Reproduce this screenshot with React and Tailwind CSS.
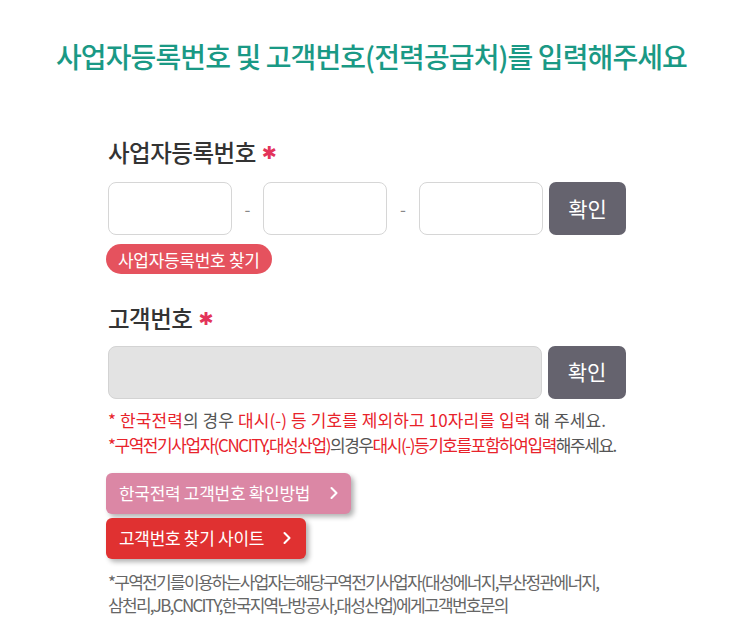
import React from 'react';
import { ChevronRight } from 'lucide-react';

const font = { fontFamily: '"Noto Sans CJK KR", "Noto Sans", sans-serif' };

function Star() {
  return (
    <span
      className="ml-[6px] text-[18px] text-[#e3345a]"
      style={{ fontFamily: '"DejaVu Sans", sans-serif' }}
    >
      ✱
    </span>
  );
}

function ConfirmButton() {
  return (
    <button
      type="button"
      className="h-[53px] w-[78px] rounded-[7px] bg-[#65636e] text-[21px] text-white"
    >
      확인
    </button>
  );
}

export default function App() {
  return (
    <div className="min-h-[644px] w-[743px] bg-white" style={font}>
      <h1 className="pt-[35px] text-center text-[28px] font-medium tracking-[-0.9px] text-[#1a9985]">
        사업자등록번호 및 고객번호(전력공급처)를 입력해주세요
      </h1>

      <div className="ml-[108px] mt-[58px] w-[518px]">
        <div className="flex items-center text-[23.5px] font-medium tracking-[-0.5px] text-[#333]">
          사업자등록번호
          <Star />
        </div>
        <div className="mt-[12px] flex items-center gap-[6px]">
          <div className="flex items-center">
            <input className="h-[53px] w-[124px] rounded-[8px] border border-[#d6d6d6] bg-white" />
            <span className="w-[31px] text-center text-[17px] text-[#888]">-</span>
            <input className="h-[53px] w-[124px] rounded-[8px] border border-[#d6d6d6] bg-white" />
            <span className="w-[32px] text-center text-[17px] text-[#888]">-</span>
            <input className="h-[53px] w-[124px] rounded-[8px] border border-[#d6d6d6] bg-white" />
          </div>
          <ConfirmButton />
        </div>
        <button
          type="button"
          className="-ml-[2px] mt-[9px] h-[30px] rounded-full bg-[#e5525e] px-[12px] text-[17px] tracking-[-0.3px] text-white"
        >
          사업자등록번호 찾기
        </button>

        <div className="mt-[27px] flex items-center text-[23.5px] font-medium tracking-[-0.5px] text-[#333]">
          고객번호
          <Star />
        </div>
        <div className="mt-[9px] flex items-center gap-[6px]">
          <input
            disabled
            className="h-[53px] w-[434px] rounded-[8px] border border-[#d3d3d3] bg-[#e3e3e3]"
          />
          <ConfirmButton />
        </div>

        <div className="mt-[8px] text-[17px] leading-[25px] tracking-[0.1px] text-[#555]">
          <p>
            <span className="text-[#e8232b]">* 한국전력</span>의 경우{' '}
            <span className="text-[#e8232b]">대시(-) 등 기호를 제외하고 10자리를 입력</span> 해 주세요.
          </p>
          <p className="tracking-[-1.45px]">
            <span className="text-[#e8232b]">*구역전기사업자(CNCITY,대성산업)</span>의경우
            <span className="text-[#e8232b]">대시(-)등기호를포함하여입력</span>해주세요.
          </p>
        </div>

        <div className="mt-[16px] flex flex-col items-start gap-[4px]">
          <button
            type="button"
            className="-ml-[2px] flex h-[41px] items-center gap-[14px] rounded-[6px] bg-[#db87a5] pl-[13px] pr-[7px] text-[17px] tracking-[-0.3px] text-white shadow-[3px_3px_5px_rgba(0,0,0,0.3)]"
          >
            한국전력 고객번호 확인방법
            <ChevronRight size={20} strokeWidth={2.5} />
          </button>
          <button
            type="button"
            className="-ml-[2px] flex h-[41px] items-center gap-[13px] rounded-[6px] bg-[#e03131] pl-[13px] pr-[9px] text-[17px] tracking-[-0.3px] text-white shadow-[3px_3px_5px_rgba(0,0,0,0.3)]"
          >
            고객번호 찾기 사이트
            <ChevronRight size={20} strokeWidth={2.5} />
          </button>
        </div>

        <p className="mt-[11px] text-[17px] leading-[23px] tracking-[-1.7px] text-[#666]">
          *구역전기를이용하는사업자는해당구역전기사업자(대성에너지,부산정관에너지,
          <br />
          삼천리,JB,CNCITY,한국지역난방공사,대성산업)에게고객번호문의
        </p>
      </div>
    </div>
  );
}
